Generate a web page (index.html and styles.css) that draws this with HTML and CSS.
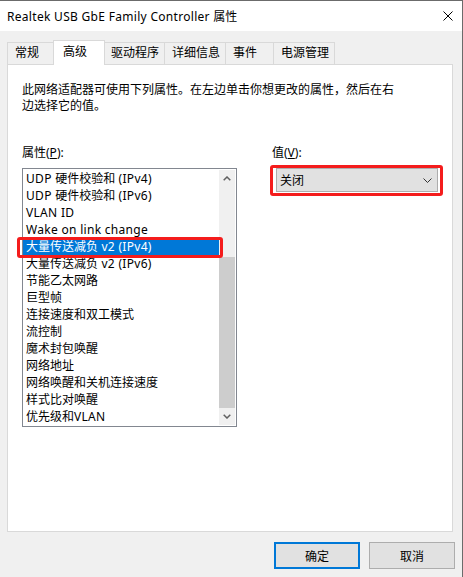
FILE: index.html
```html
<!DOCTYPE html>
<html lang="zh-CN">
<head>
    <meta charset="UTF-8">
    <title>Realtek USB GbE Family Controller 属性</title>
    <link rel="stylesheet" href="styles.css">
</head>
<body>
<div class="window">
    <!-- 标题栏 -->
    <div class="titlebar">
        <span class="title"><span class="en">Realtek USB GbE Family Controller </span>属性</span>
        <svg class="close" width="10" height="10" viewBox="0 0 10 10">
            <path d="M0.5 0.5 L9.5 9.5 M9.5 0.5 L0.5 9.5" stroke="#000" stroke-width="1" fill="none"/>
        </svg>
    </div>

    <div class="content">
        <!-- 选项卡 -->
        <div class="tabs">
            <div class="tab">常规</div>
            <div class="tab active">高级</div>
            <div class="tab">驱动程序</div>
            <div class="tab">详细信息</div>
            <div class="tab">事件</div>
            <div class="tab">电源管理</div>
        </div>

        <div class="panel">
            <p class="desc">此网络适配器可使用下列属性。在左边单击你想更改的属性，然后在右边选择它的值。</p>

            <div class="fields">
                <div class="field prop">
                    <label>属性(<u>P</u>):</label>
                    <div class="listbox">
                        <div class="items">
                            <div class="item"><span class="en">UDP </span>硬件校验和<span class="en"> (IPv4)</span></div>
                            <div class="item"><span class="en">UDP </span>硬件校验和<span class="en"> (IPv6)</span></div>
                            <div class="item"><span class="en">VLAN ID</span></div>
                            <div class="item"><span class="en">Wake on link change</span></div>
                            <div class="item selected">大量传送减负<span class="en"> v2 (IPv4)</span></div>
                            <div class="item">大量传送减负<span class="en"> v2 (IPv6)</span></div>
                            <div class="item">节能乙太网路</div>
                            <div class="item">巨型帧</div>
                            <div class="item">连接速度和双工模式</div>
                            <div class="item">流控制</div>
                            <div class="item">魔术封包唤醒</div>
                            <div class="item">网络地址</div>
                            <div class="item">网络唤醒和关机连接速度</div>
                            <div class="item">样式比对唤醒</div>
                            <div class="item">优先级和<span class="en">VLAN</span></div>
                        </div>
                        <div class="scrollbar">
                            <div class="arrow">
                                <svg width="8" height="5" viewBox="0 0 8 5"><path d="M0.7 4.3 L4 1 L7.3 4.3" stroke="#606060" stroke-width="1.5" fill="none"/></svg>
                            </div>
                            <div class="track"><div class="thumb"></div></div>
                            <div class="arrow">
                                <svg width="8" height="5" viewBox="0 0 8 5"><path d="M0.7 0.7 L4 4 L7.3 0.7" stroke="#606060" stroke-width="1.5" fill="none"/></svg>
                            </div>
                        </div>
                    </div>
                </div>

                <div class="field value">
                    <label>值(<u>V</u>):</label>
                    <div class="combo">
                        <span>关闭</span>
                        <svg width="9" height="5" viewBox="0 0 9 5"><path d="M0.5 0.5 L4.5 4.5 L8.5 0.5" stroke="#333" stroke-width="1" fill="none"/></svg>
                    </div>
                </div>
            </div>
        </div>

        <!-- 按钮 -->
        <div class="buttons">
            <button class="btn default">确定</button>
            <button class="btn">取消</button>
        </div>
    </div>
</div>
</body>
</html>
```

FILE: styles.css
```css
* {
    box-sizing: border-box;
    margin: 0;
    padding: 0;
}

body {
    font-family: "Noto Sans", "Noto Sans CJK SC", "Liberation Sans", sans-serif;
    font-size: 12px;
    color: #000;
    background-color: #fff;
    width: 463px;
    height: 577px;
    overflow: hidden;
}

/* 西文部分略宽一些 */
.en {
    letter-spacing: 0.3px;
}

.window {
    width: 463px;
    height: 577px;
    border-top: 1px solid #6b6b6b;
    border-right: 1px solid #6b6b6b;
    background-color: #f0f0f0;
    display: flex;
    flex-direction: column;
}

/* 标题栏 */
.titlebar {
    height: 30px;
    background-color: #fff;
    display: flex;
    align-items: center;
    justify-content: space-between;
    padding: 0 9px 0 7px;
}

.content {
    flex: 1;
    padding: 9px 9px 0 7px;
    display: flex;
    flex-direction: column;
}

/* 选项卡 */
.tabs {
    display: flex;
    align-items: flex-end;
    height: 24px;
}

.tab {
    height: 22px;
    min-width: 48px;
    padding: 0 5px 0 7px;
    line-height: 20px;
    border: 1px solid #d9d9d9;
    border-bottom: none;
    border-right: none;
    white-space: nowrap;
}

.tab:last-child {
    border-right: 1px solid #d9d9d9;
}

.tab.active {
    height: 25px;
    min-width: 52px;
    margin: 0 -2px -1px;
    padding: 0 7px 0 9px;
    line-height: 22px;
    background-color: #fff;
    border-right: 1px solid #d9d9d9;
    position: relative;
    z-index: 1;
}

.panel {
    height: 468px;
    background-color: #fff;
    border: 1px solid #d9d9d9;
    padding: 17px 14px 0;
}

.desc {
    width: 378px;
    line-height: 16px;
}

.fields {
    display: flex;
    margin-top: 31px;
}

.field label {
    display: block;
    line-height: 16px;
    margin-bottom: 7px;
}

.prop {
    width: 217px;
}

.value {
    margin-left: 35px;
}

/* 属性列表 */
.listbox {
    height: 259px;
    border: 1px solid #828790;
    padding: 1px 1px 1px 0;
    display: flex;
}

.items {
    flex: 1;
}

.item {
    height: 17px;
    line-height: 17px;
    padding-left: 3px;
    white-space: nowrap;
}

.item.selected {
    background-color: #0078d7;
    color: #fff;
    position: relative;
}

/* 红色标注框 */
.item.selected::after,
.combo::after {
    content: "";
    position: absolute;
    border: 3px solid #f41c1c;
    border-radius: 3px;
}

.item.selected::after {
    inset: -1px -4px -3px -6px;
}

.scrollbar {
    width: 16px;
    background-color: #f0f0f0;
    display: flex;
    flex-direction: column;
}

.arrow {
    height: 17px;
    display: flex;
    align-items: center;
    justify-content: center;
}

.track {
    flex: 1;
    padding-top: 70px;
}

.thumb {
    height: 151px;
    background-color: #cdcdcd;
}

/* 下拉框 */
.combo {
    position: relative;
    width: 162px;
    height: 24px;
    margin: 1px 0 0 4px;
    background-color: #e1e1e1;
    border: 1px solid #adadad;
    display: flex;
    align-items: center;
    justify-content: space-between;
    padding: 0 5px 0 3px;
}

.combo::after {
    inset: -4px -6px -5px -7px;
}

/* 按钮 */
.buttons {
    display: flex;
    justify-content: flex-end;
    gap: 9px;
    margin: 10px -2px 0 0;
}

.btn {
    width: 86px;
    height: 27px;
    font-family: inherit;
    font-size: 12px;
    color: #000;
    background-color: #e1e1e1;
    border: 1px solid #adadad;
}

.btn.default {
    border: 2px solid #0078d7;
}
```
